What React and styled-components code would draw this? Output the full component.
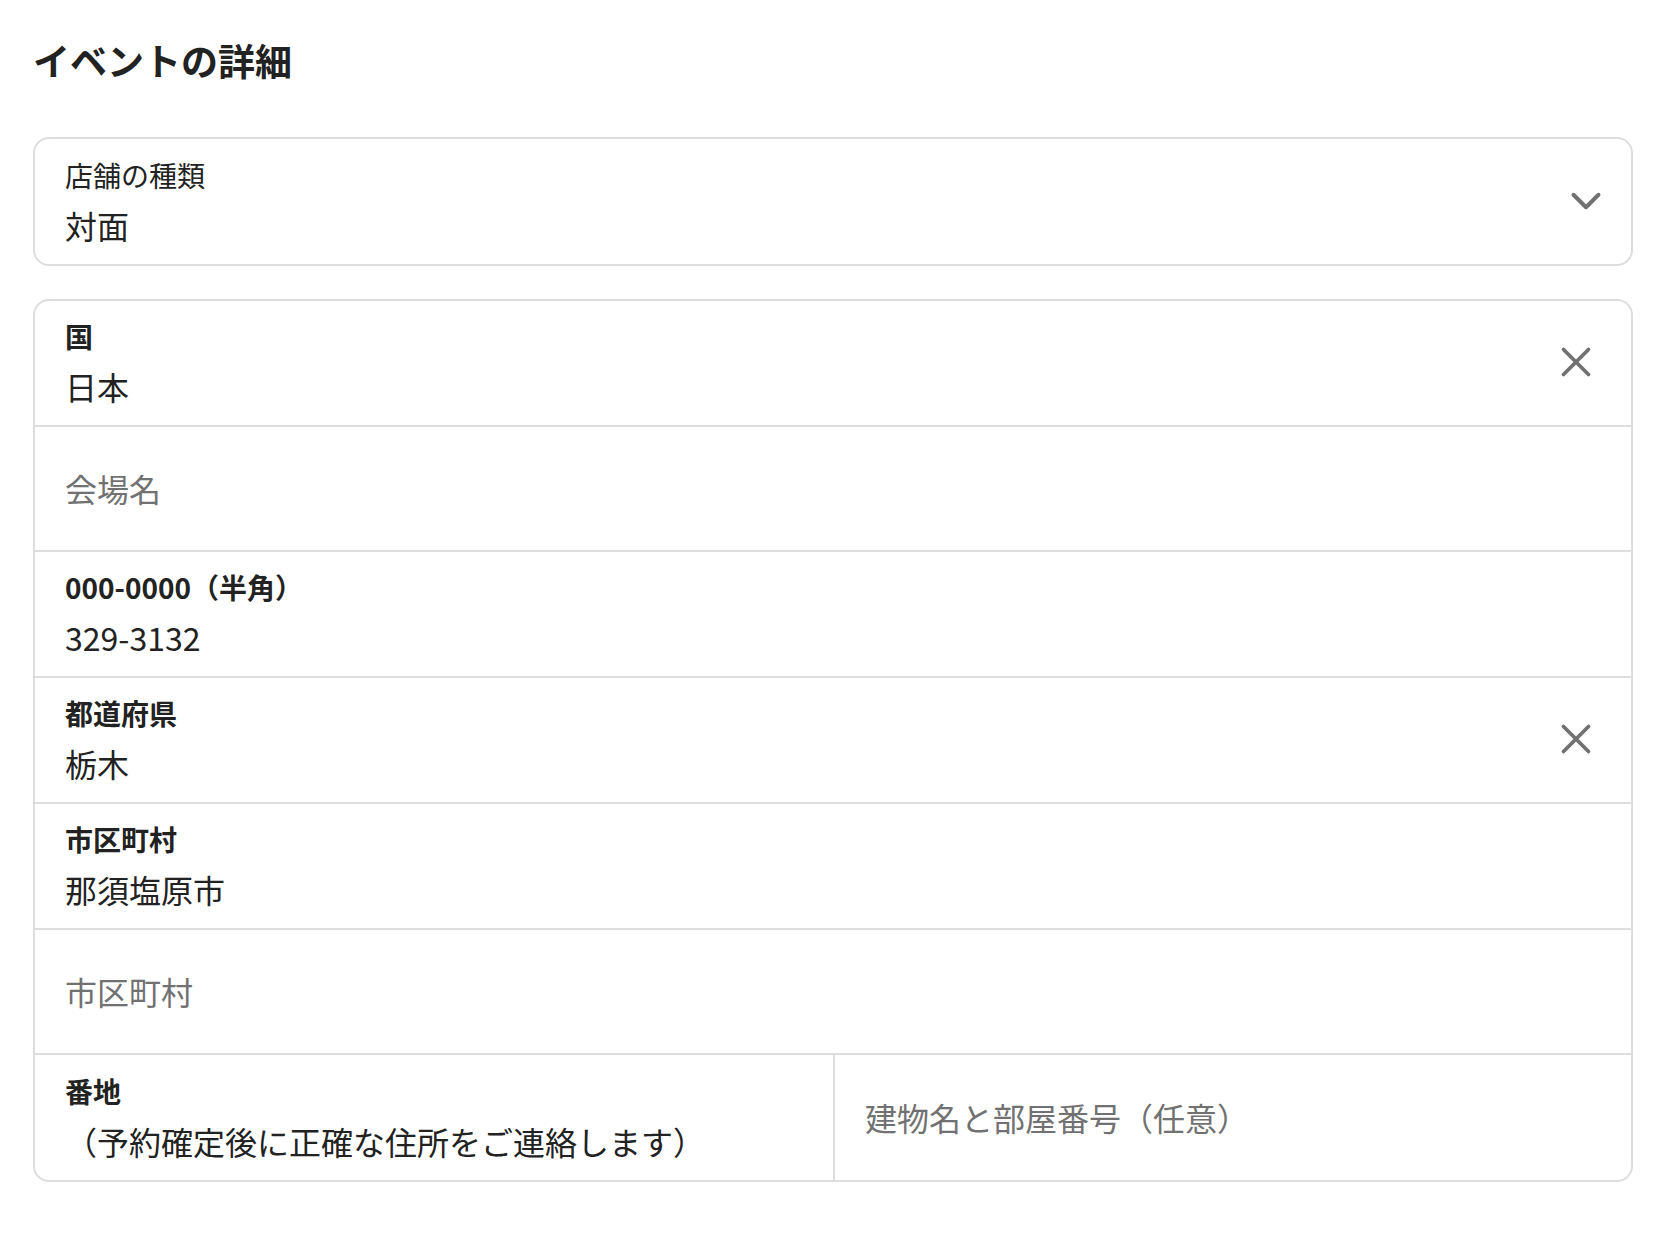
import React from 'react';
import styled, { createGlobalStyle } from 'styled-components';

const GlobalStyle = createGlobalStyle`
  body {
    margin: 0;
    background: #fff;
    font-family: "Noto Sans CJK JP", "Noto Sans", sans-serif;
    color: #222222;
  }
`;

const Page = styled.div`
  padding: 38px 37px 50px 33px;
  width: 1600px;
`;

const Title = styled.h2`
  margin: 0 0 55px;
  font-size: 37px;
  line-height: 44px;
  font-weight: 700;
  color: #222222;
`;

const Box = styled.div`
  border: 2px solid #dddddd;
  border-radius: 16px;
  background: #fff;
  overflow: hidden;

  & + & {
    margin-top: 33px;
  }
`;

const Row = styled.div`
  display: flex;
  align-items: center;
  min-height: 125px;
  box-sizing: border-box;
  padding: 17px 30px 19px;
  border-bottom: 2px solid #dddddd;

  &:last-child {
    border-bottom: none;
  }
`;

const SplitRow = styled.div`
  display: grid;
  grid-template-columns: 1fr 1fr;
`;

const Cell = styled.div`
  display: flex;
  align-items: center;
  min-height: 125px;
  box-sizing: border-box;
  padding: 17px 30px 19px;

  & + & {
    border-left: 2px solid #dddddd;
  }
`;

const Field = styled.div`
  flex: 1;
  display: flex;
  flex-direction: column;
  gap: 12px;
`;

const Label = styled.div`
  font-size: 28px;
  line-height: 36px;
  font-weight: ${(p) => (p.$plain ? 400 : 700)};
  color: #222222;
`;

const Value = styled.div`
  font-size: 32px;
  line-height: 40px;
  color: ${(p) => (p.$placeholder ? '#717171' : '#222222')};
`;

const IconButton = styled.span`
  display: flex;
  align-items: center;
  justify-content: center;
  width: 50px;
  height: 50px;
  margin-right: ${(p) => p.$offset}px;
  color: #717171;
`;

function ChevronIcon() {
  return (
    <svg width="50" height="50" viewBox="0 0 24 24" fill="none" stroke="currentColor" strokeWidth="1.9" strokeLinecap="round" strokeLinejoin="round">
      <path d="m6 9 6 6 6-6" />
    </svg>
  );
}

function CloseIcon() {
  return (
    <svg width="50" height="50" viewBox="0 0 24 24" fill="none" stroke="currentColor" strokeWidth="1.8" strokeLinecap="round">
      <path d="M18 6 6 18M6 6l12 12" />
    </svg>
  );
}

const ADDRESS = [
  { label: '国', value: '日本', clear: true },
  { placeholder: '会場名' },
  { label: '000-0000（半角）', value: '329-3132' },
  { label: '都道府県', value: '栃木', clear: true },
  { label: '市区町村', value: '那須塩原市' },
  { placeholder: '市区町村' },
];

export default function App() {
  return (
    <Page>
      <GlobalStyle />
      <Title>イベントの詳細</Title>

      <Box>
        <Row>
          <Field>
            <Label $plain>店舗の種類</Label>
            <Value>対面</Value>
          </Field>
          <IconButton $offset={-10}>
            <ChevronIcon />
          </IconButton>
        </Row>
      </Box>

      <Box>
        {ADDRESS.map((item, i) => (
          <Row key={i}>
            <Field>
              {item.placeholder ? (
                <Value $placeholder>{item.placeholder}</Value>
              ) : (
                <>
                  <Label>{item.label}</Label>
                  <Value>{item.value}</Value>
                </>
              )}
            </Field>
            {item.clear && (
              <IconButton $offset={0}>
                <CloseIcon />
              </IconButton>
            )}
          </Row>
        ))}
        <SplitRow>
          <Cell>
            <Field>
              <Label>番地</Label>
              <Value>（予約確定後に正確な住所をご連絡します）</Value>
            </Field>
          </Cell>
          <Cell>
            <Field>
              <Value $placeholder>建物名と部屋番号（任意）</Value>
            </Field>
          </Cell>
        </SplitRow>
      </Box>
    </Page>
  );
}
